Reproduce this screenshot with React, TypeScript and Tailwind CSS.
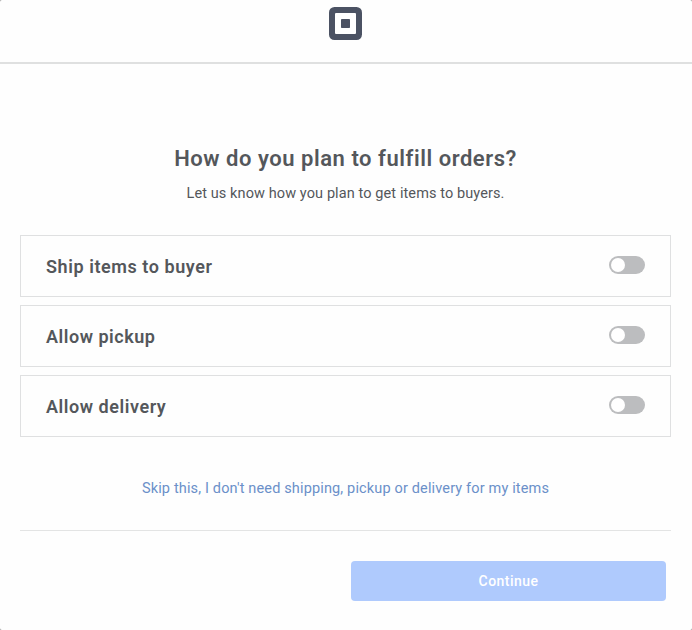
const options = [
  { label: 'Ship items to buyer', tracking: 'tracking-[0.57px]' },
  { label: 'Allow pickup', tracking: 'tracking-[0.52px]' },
  { label: 'Allow delivery', tracking: 'tracking-[0.55px]' },
];

function Logo() {
  return (
    <svg width="33" height="33" viewBox="0 0 33 33" aria-label="Square">
      <rect width="33" height="33" rx="5.5" fill="#4b5263" />
      <rect x="6" y="6" width="21" height="21" rx="1" fill="#fff" />
      <rect x="12" y="12" width="9" height="9" rx="0.75" fill="#4b5263" />
    </svg>
  );
}

function Toggle() {
  return (
    <button
      type="button"
      role="switch"
      aria-checked="false"
      className="mb-[2px] flex h-[18px] w-9 items-center rounded-full bg-[#bcbdbf] pl-[2px]"
    >
      <span className="size-[14px] rounded-full bg-white" />
    </button>
  );
}

export default function App() {
  return (
    <div className="h-[630px] w-[692px] bg-[#9a9a9a]">
      <div className="flex h-full w-full flex-col rounded-[2px] bg-[#fefefe] font-['Roboto',sans-serif] text-[#54575b]">
        <header className="flex h-[64px] shrink-0 justify-center border-b-2 border-[#dfe0e0] pr-[1px] pt-[7px]">
          <Logo />
        </header>
        <main className="ml-5 flex w-[651px] flex-col">
          <h1 className="mt-[79px] whitespace-nowrap text-center text-[22px] font-semibold leading-8 tracking-[0.54px]">
            How do you plan to fulfill orders?
          </h1>
          <p className="mt-[9px] whitespace-nowrap text-center text-[14.5px] leading-5 tracking-[0.1px]">
            Let us know how you plan to get items to buyers.
          </p>
          <div className="mt-[31px] flex flex-col gap-2">
            {options.map(({ label, tracking }) => (
              <div key={label} className="flex h-[62px] items-center justify-between border border-[#dfe0e1] px-[25px]">
                <span className={`pt-[2px] text-[18px] font-semibold leading-6 ${tracking}`}>{label}</span>
                <Toggle />
              </div>
            ))}
          </div>
          <a className="mt-[42px] whitespace-nowrap text-center text-[14.5px] leading-5 tracking-[0.15px] text-[#6b90c9]">
            Skip this, I don't need shipping, pickup or delivery for my items
          </a>
          <div className="mt-[31px] border-t border-[#e3e4e4] pr-[5px] pt-[30px]">
            <button
              type="button"
              className="ml-auto block h-10 w-[315px] rounded-[4px] bg-[#afcafd] text-[14px] font-medium tracking-[0.45px] text-white"
            >
              Continue
            </button>
          </div>
        </main>
      </div>
    </div>
  );
}
